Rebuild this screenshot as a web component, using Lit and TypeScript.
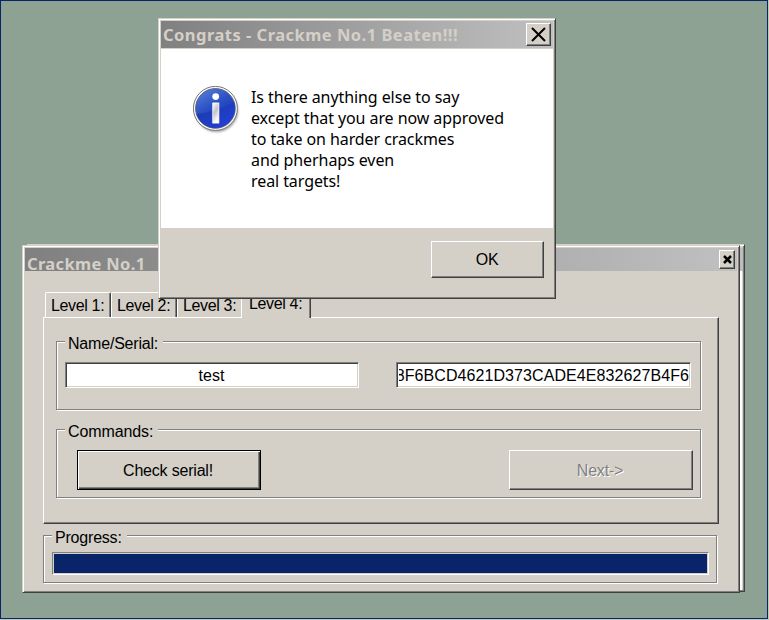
import { LitElement, html, css, svg } from "lit";
import { customElement } from "lit/decorators.js";

const infoIcon = html`<svg class="info" width="48" height="50" viewBox="0 0 48 50">
  <defs>
    <linearGradient id="ball" x1="0" y1="0" x2="0.6" y2="1">
      <stop offset="0" stop-color="#5c86e0" />
      <stop offset="0.5" stop-color="#2a50c4" />
      <stop offset="1" stop-color="#1a32b0" />
    </linearGradient>
    <linearGradient id="low" x1="0" y1="0" x2="1" y2="1">
      <stop offset="0" stop-color="#1a3aa4" />
      <stop offset="1" stop-color="#2440dc" />
    </linearGradient>
    <linearGradient id="stem" x1="0" y1="0" x2="0.4" y2="1">
      <stop offset="0" stop-color="#ffffff" />
      <stop offset="0.5" stop-color="#c4c4c8" />
      <stop offset="1" stop-color="#ffffff" />
    </linearGradient>
    <filter id="soft" x="-20%" y="-20%" width="140%" height="140%"><feGaussianBlur stdDeviation="1" /></filter>
  </defs>
  <circle cx="24.5" cy="25.5" r="21.6" fill="#777" opacity="0.7" filter="url(#soft)" />
  <circle cx="23.4" cy="23.4" r="22" fill="#fafafa" stroke="#777" stroke-width="1" />
  <circle cx="23.4" cy="23.4" r="19.8" fill="url(#ball)" stroke="#566082" stroke-width="1" />
  <path d="M4.4 29 Q23 27 42 17 A19.4 19.4 0 0 1 4.4 29Z" fill="url(#low)" />
  <circle cx="23.7" cy="11.6" r="3.4" fill="#fff" />
  <rect x="20.8" y="18" width="6" height="20" fill="url(#stem)" stroke="#fff" stroke-width="0.9" />
</svg>`;

@customElement("app-root")
export class AppRoot extends LitElement {
  static styles = css`
    :host {
      display: block;
      position: relative;
      box-sizing: border-box;
      width: 769px;
      height: 620px;
      overflow: hidden;
      background: #8da293;
      font: 16px/18px "Liberation Sans", Arial, sans-serif;
      letter-spacing: -0.2px;
      color: #000;
      --face: #d4d0c8;
    }
    * { box-sizing: border-box; }
    .edge {
      position: absolute;
      inset: 0;
      border: 0 solid #b9cdb4;
      border-width: 0 1px 1px 0;
    }
    .edge-in { height: 100%; border: 1px solid #0a246a; }
    .win {
      position: absolute;
      background: var(--face);
      border: 1px solid;
      border-color: var(--face) #404040 #404040 var(--face);
      box-shadow: inset 1px 1px #fff, inset -1px -1px #808080;
      padding: 2px;
    }
    .back { left: 27px; top: 244px; width: 718px; height: 348px; padding: 3px 1px 0 0; display: flex; justify-content: flex-end; }
    .back i { width: 4px; height: 24px; background: #bdbdbd; }
    .back-white { position: absolute; right: 2px; top: 26px; bottom: 1px; width: 2px; background: #fff; }
    .main { left: 22px; top: 245px; width: 718px; height: 348px; display: flex; flex-direction: column; }
    .dialog { left: 158px; top: 18px; width: 398px; height: 281px; display: flex; flex-direction: column; }
    .bar {
      display: flex;
      justify-content: space-between;
      background: linear-gradient(90deg, #808080, #c0c0c0);
      font: bold 16.5px/20px "Noto Sans", "DejaVu Sans Condensed", sans-serif;
      color: var(--face);
      white-space: pre;
      flex: none;
    }
    .main .bar { height: 23px; padding: 2px 2px 0 2px; }
    .main .bar span { padding-top: 4px; height: 21px; letter-spacing: 0.35px; }
    .dialog .bar { height: 27px; padding: 2px 2px 0 2px; }
    .dialog .bar span { padding-top: 2px; letter-spacing: 0.48px; }
    .btn {
      display: flex;
      align-items: center;
      justify-content: center;
      background: var(--face);
      border: 1px solid;
      border-color: #fff #404040 #404040 #fff;
      box-shadow: inset -1px -1px #808080;
      color: #000;
      padding: 0;
      font: inherit;
      letter-spacing: inherit;
    }
    .x-main { width: 16px; height: 19px; }
    .x-main svg { margin: 0 0 1px 0; }
    .x-dlg { width: 25px; height: 23px; }
    .msg { height: 179px; margin-top: 1px; background: #fff; display: flex; padding: 36px 0 0 31px; flex: none; }
    .info { flex: none; }
    .msg p {
      margin: 2px 0 0 11px;
      font: 16px/21px "Noto Sans", "DejaVu Sans Condensed", sans-serif;
      letter-spacing: -0.08px;
      white-space: pre;
    }
    .foot { display: flex; justify-content: flex-end; padding: 13px 9px 0 0; }
    .ok { width: 113px; height: 37px; padding-right: 1px; }
    .tabs { display: flex; height: 25px; margin: 21px 0 0 20px; align-items: flex-start; }
    .tab {
      height: 25px;
      border: solid;
      border-width: 1px 1px 0 1px;
      border-color: #fff #404040 #fff #fff;
      border-radius: 2px 2px 0 0;
      box-shadow: inset -1px 0 #808080;
      width: 66px;
      padding: 4px 0 0 5px;
      letter-spacing: -0.35px;
      white-space: pre;
    }
    .tab.third { width: 65px; border-right-color: #fff; box-shadow: none; }
    .tab.on { width: 69px; height: 28px; margin-top: -2px; padding-left: 6px; border-left-color: transparent; background: var(--face); position: relative; }
    .panel {
      width: 676px;
      height: 207px;
      margin-left: 18px;
      border: 1px solid;
      border-color: #fff #404040 #404040 #fff;
      box-shadow: inset -1px -1px #808080;
      padding: 23px 0 0 12px;
      flex: none;
    }
    .group {
      position: relative;
      width: 645px;
      border: 1px solid #808080;
      box-shadow: 1px 1px #fff, inset 1px 1px #fff;
      display: flex;
      justify-content: space-between;
    }
    .group > b { position: absolute; font-weight: normal; left: 8px; top: -7px; padding: 0 4px 0 3px; background: var(--face); white-space: pre; }
    .g1 { height: 69px; padding: 20px 9px 0 8px; }
    .g2 { height: 69px; margin-top: 19px; padding: 20px 7px 0 20px; }
    .g3 { height: 48px; width: 674px; margin: 11px 0 0 18px; padding: 16px 7px 0 8px; }
    .g1 > b { width: 98px; }
    .g2 > b { width: 93px; letter-spacing: -0.1px; }
    .g3 > b { width: 75px; }
    .field {
      height: 26px;
      background: #fff;
      border: 1px solid;
      border-color: #808080 #fff #fff #808080;
      box-shadow: inset 1px 1px #404040, inset -1px -1px var(--face);
      display: flex;
      justify-content: center;
      padding: 4px 2px 0 2px;
    }
    .name { width: 294px; padding-right: 3px; letter-spacing: 0; }
    .serial { width: 295px; padding-right: 1px; letter-spacing: 0.08px; }
    .clip { display: flex; justify-content: flex-end; width: 100%; overflow: hidden; height: 20px; }
    .cmd { width: 184px; height: 40px; padding: 2px 2px 0 0; }
    .cmd.def { border-color: #000; box-shadow: inset 1px 1px #fff, inset -1px -1px #404040, inset -2px -2px #808080; }
    .cmd.off { color: #808080; text-shadow: 1px 1px #fff; }
    .prog { width: 657px; height: 23px; border: 1px solid; border-color: #808080 #fff #fff #808080; padding: 1px; }
    .fill { height: 100%; background: #0a246a; }
  `;

  private cross(size: number, w: number) {
    return html`<svg width=${size} height=${size} viewBox="0 0 ${size} ${size}">
      ${svg`<path d="M1 1L${size - 1} ${size - 1}M${size - 1} 1L1 ${size - 1}" stroke="#000" stroke-width=${w} />`}
    </svg>`;
  }

  render() {
    return html`
      <div class="edge"><div class="edge-in"></div></div>
      <div class="win back"><i></i><div class="back-white"></div></div>
      <div class="win main">
        <div class="bar"><span>Crackme No.1</span><button class="btn x-main">${this.cross(9, 2.5)}</button></div>
        <div class="tabs">
          <div class="tab">Level 1:</div>
          <div class="tab">Level 2:</div>
          <div class="tab third">Level 3:</div>
          <div class="tab on">Level 4:</div>
        </div>
        <div class="panel">
          <div class="group g1">
            <b>Name/Serial:</b>
            <div class="field name">test</div>
            <div class="field serial"><div class="clip"><span>098F6BCD4621D373CADE4E832627B4F6</span></div></div>
          </div>
          <div class="group g2">
            <b>Commands:</b>
            <button class="btn cmd def">Check serial!</button>
            <button class="btn cmd off">Next-&gt;</button>
          </div>
        </div>
        <div class="group g3">
          <b>Progress:</b>
          <div class="prog"><div class="fill"></div></div>
        </div>
      </div>
      <div class="win dialog">
        <div class="bar"><span>Congrats - Crackme No.1 Beaten!!!</span><button class="btn x-dlg">${this.cross(15, 2)}</button></div>
        <div class="msg">
          ${infoIcon}
          <p>${"Is there anything else to say\nexcept that you are now approved\nto take on harder crackmes\nand pherhaps even\nreal targets!"}</p>
        </div>
        <div class="foot"><button class="btn ok">OK</button></div>
      </div>
    `;
  }
}
